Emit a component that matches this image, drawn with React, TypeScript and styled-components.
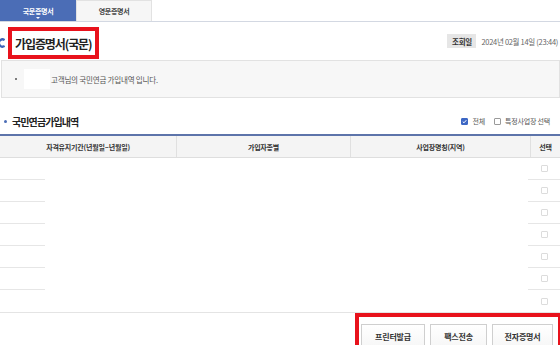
import React from "react";
import styled, { createGlobalStyle } from "styled-components";

const GlobalStyle = createGlobalStyle`
  html, body {
    margin: 0;
    padding: 0;
    background: #ffffff;
    overflow: hidden;
  }
  body {
    font-family: "Noto Sans CJK KR", "Noto Sans", "Liberation Sans", sans-serif;
    color: #333333;
  }
`;

const Page = styled.div`
  position: relative;
  width: 560px;
  height: 345px;
  overflow: hidden;
`;

const TabBar = styled.div`
  display: flex;
  height: 21px;
  border-bottom: 1px solid #d3d8e2;
`;

const Tab = styled.div<{ $active?: boolean }>`
  position: relative;
  width: 76px;
  display: flex;
  align-items: center;
  justify-content: center;
  font-size: 7px;
  font-weight: 700;
  letter-spacing: -0.3px;
  color: ${(p) => (p.$active ? "#ffffff" : "#444444")};
  background: ${(p) => (p.$active ? "#4b6db6" : "#f6f6f6")};
  border: 1px solid ${(p) => (p.$active ? "#4b6db6" : "#e2e2e2")};
  border-bottom: none;
  box-sizing: border-box;

  ${(p) =>
    p.$active &&
    `&::after {
      content: "";
      position: absolute;
      left: 50%;
      bottom: 2px;
      margin-left: -2px;
      border-left: 2px solid transparent;
      border-right: 2px solid transparent;
      border-top: 2px solid #ffffff;
    }`}
`;

const TitleRow = styled.div`
  display: flex;
  align-items: center;
  justify-content: space-between;
  height: 38px;
  padding-right: 2px;
`;

const Title = styled.h1`
  display: flex;
  align-items: center;
  gap: 10px;
  margin: 0;
  font-size: 12px;
  font-weight: 700;
  letter-spacing: -1.1px;
  color: #222222;
  padding-top: 4px;
`;

const DateInfo = styled.div`
  display: flex;
  align-items: center;
  gap: 5px;
  font-size: 7.5px;
  color: #666666;
  letter-spacing: -0.3px;
`;

const DateBadge = styled.span`
  display: inline-flex;
  align-items: center;
  justify-content: center;
  width: 29px;
  height: 14px;
  background: #e6e6e6;
  color: #333333;
  font-weight: 700;
  font-size: 7.5px;
`;

const InfoBox = styled.div`
  display: flex;
  align-items: center;
  height: 38px;
  box-sizing: border-box;
  margin-left: 1px;
  padding-left: 13px;
  background: #f7f7f7;
  border: 1px solid #e2e2e2;
  font-size: 7.5px;
  color: #555555;
  letter-spacing: -0.2px;
`;

const Dot = styled.span<{ $color: string; $size: number }>`
  display: inline-block;
  width: ${(p) => p.$size}px;
  height: ${(p) => p.$size}px;
  border-radius: 50%;
  background: ${(p) => p.$color};
`;

const Masked = styled.span`
  display: inline-block;
  width: 26px;
  height: 20px;
  margin: 0 1px 0 7px;
  background: #ffffff;
`;

const SectionHead = styled.div`
  display: flex;
  align-items: center;
  justify-content: space-between;
  height: 36px;
  padding: 10px 10px 0 4px;
  box-sizing: border-box;
`;

const SectionTitle = styled.h2`
  display: flex;
  align-items: center;
  gap: 5px;
  margin: 0;
  font-size: 10px;
  font-weight: 700;
  letter-spacing: -0.9px;
  color: #222222;
`;

const Options = styled.div`
  display: flex;
  align-items: center;
  gap: 9px;
  font-size: 7px;
  color: #555555;
  letter-spacing: -0.2px;
`;

const Option = styled.label`
  display: flex;
  align-items: center;
  gap: 4px;
`;

const Box = styled.span<{ $checked?: boolean; $faint?: boolean }>`
  display: inline-flex;
  align-items: center;
  justify-content: center;
  width: 7px;
  height: 7px;
  box-sizing: border-box;
  border: 1px solid ${(p) => (p.$checked ? "#3d67c4" : p.$faint ? "#dcdcdc" : "#9a9a9a")};
  background: ${(p) => (p.$checked ? "#3d67c4" : "#ffffff")};
  border-radius: 1px;
`;

const Table = styled.div`
  border-top: 2px solid #5d74aa;
  border-bottom: 1px solid #e4e4e4;
`;

const HeadRow = styled.div`
  display: grid;
  grid-template-columns: 177px 174px 180px 29px;
  height: 21px;
  background: #f4f4f4;
  border-bottom: 1px solid #dedede;
`;

const HeadCell = styled.div<{ $last?: boolean }>`
  display: flex;
  align-items: center;
  justify-content: center;
  font-size: 7px;
  font-weight: 700;
  color: #333333;
  letter-spacing: -0.2px;
  border-right: ${(p) => (p.$last ? "none" : "1px solid #e0e0e0")};
`;

const BodyRow = styled.div`
  display: grid;
  grid-template-columns: 45px 1fr 32px;
  height: 22px;
`;

const EdgeCell = styled.div<{ $line: boolean }>`
  display: flex;
  align-items: center;
  justify-content: center;
  border-bottom: ${(p) => (p.$line ? "1px solid #e6e6e6" : "none")};
  box-sizing: border-box;
`;

const ButtonBar = styled.div`
  display: flex;
  justify-content: flex-end;
  gap: 5px;
  padding: 11px 7px 0 0;
`;

const Button = styled.button<{ $w: number }>`
  height: 25px;
  width: ${(p) => p.$w}px;
  padding: 0;
  box-sizing: border-box;
  border: 1px solid #cfcfcf;
  background: linear-gradient(#ffffff, #f6f6f6);
  font-family: inherit;
  font-size: 8px;
  font-weight: 700;
  color: #333333;
  letter-spacing: -0.2px;
`;

const Highlight = styled.div<{ $x: number; $y: number; $w: number; $h: number }>`
  position: absolute;
  left: ${(p) => p.$x}px;
  top: ${(p) => p.$y}px;
  width: ${(p) => p.$w}px;
  height: ${(p) => p.$h}px;
  border: 4px solid #e8121c;
  box-sizing: border-box;
  pointer-events: none;
`;

const Check = () => (
  <svg width="5" height="5" viewBox="0 0 10 10">
    <path d="M1.5 5.2 L4 7.6 L8.6 2.4" fill="none" stroke="#ffffff" strokeWidth="2" />
  </svg>
);

const TitleMark = () => (
  <svg width="5" height="10" viewBox="0 0 5 10">
    <path d="M4.6 2 A3.6 3.6 0 1 0 4.6 8" fill="none" stroke="#3b62b8" strokeWidth="2.2" />
  </svg>
);

const rows = [0, 1, 2, 3, 4, 5, 6];

const App: React.FC = () => {
  return (
    <Page>
      <GlobalStyle />
      <TabBar>
        <Tab $active>국문증명서</Tab>
        <Tab>영문증명서</Tab>
      </TabBar>

      <TitleRow>
        <Title>
          <TitleMark />
          가입증명서(국문)
        </Title>
        <DateInfo>
          <DateBadge>조회일</DateBadge>
          <span>2024년 02월 14일 (23:44)</span>
        </DateInfo>
      </TitleRow>

      <InfoBox>
        <Dot $color="#555555" $size={2} />
        <Masked />
        고객님의 국민연금 가입내역 입니다.
      </InfoBox>

      <SectionHead>
        <SectionTitle>
          <Dot $color="#4b6db6" $size={3} />
          국민연금가입내역
        </SectionTitle>
        <Options>
          <Option>
            <Box $checked>
              <Check />
            </Box>
            전체
          </Option>
          <Option>
            <Box />
            특정사업장 선택
          </Option>
        </Options>
      </SectionHead>

      <Table>
        <HeadRow>
          <HeadCell>자격유지기간(년월일~년월일)</HeadCell>
          <HeadCell>가입자종별</HeadCell>
          <HeadCell>사업장명칭(지역)</HeadCell>
          <HeadCell $last>선택</HeadCell>
        </HeadRow>
        {rows.map((r) => (
          <BodyRow key={r}>
            <EdgeCell $line={r < rows.length - 1} />
            <div />
            <EdgeCell $line={r < rows.length - 1}>
              <Box $faint />
            </EdgeCell>
          </BodyRow>
        ))}
      </Table>

      <ButtonBar>
        <Button $w={64}>프린터발급</Button>
        <Button $w={57}>팩스전송</Button>
        <Button $w={61}>전자증명서</Button>
      </ButtonBar>

      <Highlight $x={8} $y={27} $w={91} $h={32} />
      <Highlight $x={355} $y={313} $w={207} $h={40} />
    </Page>
  );
};

export default App;
